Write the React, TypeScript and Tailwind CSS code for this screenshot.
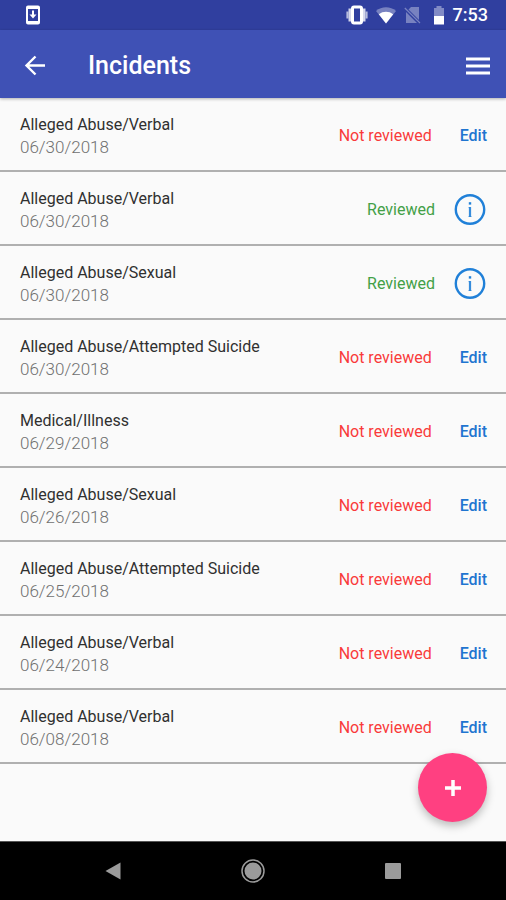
type Incident = {
    type: string;
    date: string;
    reviewed: boolean;
};

const incidents: Incident[] = [
    { type: "Alleged Abuse/Verbal", date: "06/30/2018", reviewed: false },
    { type: "Alleged Abuse/Verbal", date: "06/30/2018", reviewed: true },
    { type: "Alleged Abuse/Sexual", date: "06/30/2018", reviewed: true },
    { type: "Alleged Abuse/Attempted Suicide", date: "06/30/2018", reviewed: false },
    { type: "Medical/Illness", date: "06/29/2018", reviewed: false },
    { type: "Alleged Abuse/Sexual", date: "06/26/2018", reviewed: false },
    { type: "Alleged Abuse/Attempted Suicide", date: "06/25/2018", reviewed: false },
    { type: "Alleged Abuse/Verbal", date: "06/24/2018", reviewed: false },
    { type: "Alleged Abuse/Verbal", date: "06/08/2018", reviewed: false },
];

function StatusBar() {
    return (
        <div className="flex h-[30px] items-center justify-between bg-[#303f9f] pr-[18px] pl-[26px] text-white">
            <svg width="14" height="20" viewBox="0 0 14 20" fill="none">
                <rect x="1" y="1.5" width="12" height="17" rx="1" stroke="currentColor" strokeWidth="2" />
                <path d="M1 2.5h12M1 17.5h12" stroke="currentColor" strokeWidth="3" />
                <path d="M6 5.5h2v4h2.5L7 13.5 3.5 9.5H6z" fill="currentColor" />
            </svg>

            <div className="flex items-center">
                {/* Vibrate */}
                <svg className="mr-2" width="22" height="20" viewBox="0 0 22 20" fill="none" stroke="currentColor">
                    <rect x="6.5" y="2" width="9" height="16" rx="1.5" strokeWidth="3" />
                    <path d="M3.8 3.5v13M18.2 3.5v13" strokeWidth="2.6" strokeOpacity="0.8" />
                    <path d="M1.4 6.5v7M20.6 6.5v7" strokeWidth="2" strokeOpacity="0.65" />
                </svg>
                {/* Wifi */}
                <svg className="mr-2" width="20" height="18" viewBox="0 0 20 18" fill="currentColor">
                    <path d="M10 17.5 0 5C5.5 0 14.5 0 20 5z" opacity="0.35" />
                    <path d="M10 17.5 2.8 8.3C7 5 13 5 17.2 8.3z" />
                </svg>
                {/* No SIM */}
                <svg className="mr-3" width="17" height="18" viewBox="0 0 17 18">
                    <path d="M7 1h8v13L4.5 3.5z" fill="currentColor" opacity="0.35" />
                    <path d="M2 6v11h11z" fill="currentColor" opacity="0.35" />
                    <path d="M.8 2 16 17" stroke="currentColor" strokeWidth="1.2" opacity="0.35" />
                </svg>
                {/* Battery */}
                <svg className="mr-2" width="12" height="19" viewBox="0 0 12 19" fill="currentColor">
                    <path d="M3.5 0h5v2H11v8H1V2h2.5z" opacity="0.4" />
                    <path d="M1 10h10v8.5H1z" />
                </svg>
                <span className="text-[18px] leading-5 font-medium">7:53</span>
            </div>
        </div>
    );
}

function Header() {
    return (
        <header className="relative z-10 flex h-[68px] items-center bg-[#3f51b5] pt-1 pr-4 pl-6 text-white shadow-[0_1px_3px_rgba(0,0,0,0.3)]">
            <button type="button" aria-label="Back">
                <svg width="22" height="22" viewBox="0 0 22 22" fill="none" stroke="currentColor" strokeWidth="2.4">
                    <path d="M21 10.5H3M11.5 1.5l-9 9 9 9" />
                </svg>
            </button>
            <h1 className="ml-[42px] flex-1 text-[25px] leading-8 font-medium">Incidents</h1>
            <button type="button" aria-label="Menu">
                <svg width="24" height="18" viewBox="0 0 24 18" fill="currentColor">
                    <path d="M0 .5h24v3H0zM0 7.5h24v3H0zM0 14.5h24v3H0z" />
                </svg>
            </button>
        </header>
    );
}

function IncidentRow({ incident }: { incident: Incident }) {
    return (
        <li className="flex items-center justify-between border-b-2 border-[#b0b0b0] pt-4 pr-[19px] pb-3 pl-5">
            <div>
                <p className="text-[16px] leading-[22px] text-[#303030]">{incident.type}</p>
                <p className="text-[17px] leading-[22px] font-light text-[#707070]">{incident.date}</p>
            </div>
            {incident.reviewed ? (
                <div className="flex items-center gap-[18px]">
                    <span className="text-[16px] leading-[22px] text-[#43a047]">Reviewed</span>
                    <button type="button" aria-label="Details" className="text-[#2080d8]">
                        <svg width="34" height="32" viewBox="0 0 34 32" fill="none" stroke="currentColor">
                            <circle cx="17" cy="15.5" r="14.2" strokeWidth="2.4" />
                            <path d="M17 13v10" strokeWidth="2.2" strokeOpacity="0.9" />
                            <path d="M15.2 13.6h1.8M15.2 22.5h3.6" strokeWidth="1" strokeOpacity="0.4" />
                            <path d="M15.8 8.2h2.4v2.4h-2.4z" fill="currentColor" stroke="none" />
                        </svg>
                    </button>
                </div>
            ) : (
                <div className="flex items-center gap-7">
                    <span className="text-[16px] leading-[22px] text-[#f93a3a]">Not reviewed</span>
                    <button type="button" className="text-[16px] leading-[22px] font-medium text-[#1f75d0]">
                        Edit
                    </button>
                </div>
            )}
        </li>
    );
}

function NavigationBar() {
    return (
        <nav className="grid grid-cols-[1fr_auto_1fr] items-center gap-[104px] border-t border-[#555555] bg-black py-[17px] text-[#9b9b9b]">
            <button type="button" aria-label="System back" className="justify-self-end">
                <svg width="48" height="24" viewBox="0 0 48 24" fill="currentColor">
                    <path d="M16.5 12 31.5 3.5v17z" />
                </svg>
            </button>
            <button type="button" aria-label="Home">
                <svg width="24" height="24" viewBox="0 0 24 24">
                    <circle cx="12" cy="12" r="11" fill="none" stroke="currentColor" strokeWidth="1.5" />
                    <circle cx="12" cy="12" r="8.5" fill="currentColor" />
                </svg>
            </button>
            <button type="button" aria-label="Recent apps">
                <svg width="48" height="24" viewBox="0 0 48 24" fill="currentColor">
                    <rect x="16" y="4" width="16" height="16" rx="1" />
                </svg>
            </button>
        </nav>
    );
}

export default function App() {
    return (
        <div className="flex min-h-screen flex-col bg-[#fafafa] font-['Roboto',sans-serif]">
            <StatusBar />
            <Header />

            <main className="relative flex-1">
                <ul>
                    {incidents.map((incident, index) => (
                        <IncidentRow key={index} incident={incident} />
                    ))}
                </ul>

                <button
                    type="button"
                    aria-label="Add incident"
                    className="absolute right-[19px] bottom-[19px] flex size-[69px] items-center justify-center rounded-full bg-[#ff4081] text-white shadow-[0_4px_8px_rgba(0,0,0,0.25)]"
                >
                    <svg width="18" height="18" viewBox="0 0 18 18" fill="none" stroke="currentColor" strokeWidth="3.5">
                        <path d="M9 1v16M1 9h16" />
                    </svg>
                </button>
            </main>

            <NavigationBar />
        </div>
    );
}
